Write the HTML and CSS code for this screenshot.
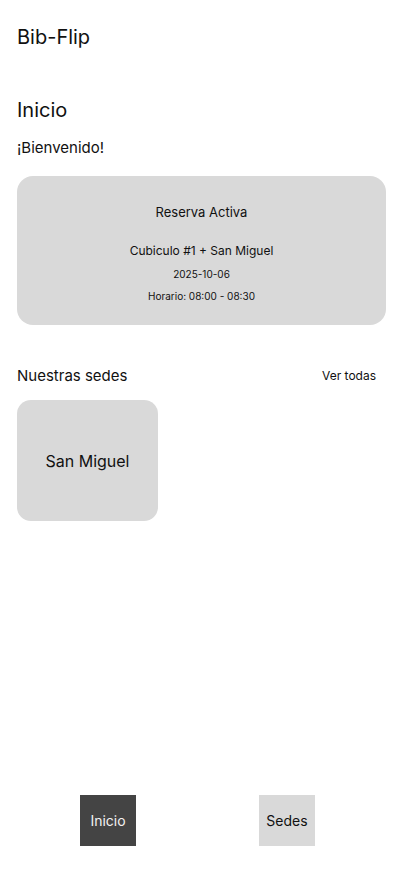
FILE: index.html
```html
<!doctype html>
<html>
<head>
    <meta charset="utf-8">
    <title>Bib-Flip</title>
    <link rel="stylesheet" href="styles.css">
</head>
<body>
<div class="app">
    <p class="brand">Bib-Flip</p>
    <h1 class="title">Inicio</h1>
    <p class="welcome">¡Bienvenido!</p>

    <div class="reserva">
        <p class="reserva-title">Reserva Activa</p>
        <p class="reserva-place">Cubiculo #1 + San Miguel</p>
        <p class="reserva-small">2025-10-06</p>
        <p class="reserva-small">Horario: 08:00 - 08:30</p>
    </div>

    <div class="sedes-head">
        <span class="sedes-title">Nuestras sedes</span>
        <a href="#" class="ver-todas">Ver todas</a>
    </div>
    <div class="sedes-list">
        <div class="sede">San Miguel</div>
    </div>

    <div class="nav">
        <a href="#" class="nav-btn active">Inicio</a>
        <a href="#" class="nav-btn">Sedes</a>
    </div>
</div>
</body>
</html>
```

FILE: styles.css
```css
body{margin:0; padding:0; background:#fff; font-family:Inter, "Noto Sans", sans-serif; color:#111;}
p,h1{margin:0;}
a{text-decoration:none; color:#111;}

.app{height:874px; display:flex; flex-direction:column; padding:0 16px 0 17px; box-sizing:border-box;}
.brand{font-size:20px; line-height:24px; margin-top:25px;}
.title{font-size:20px; font-weight:400; line-height:24px; margin-top:49px;}
.welcome{font-size:15px; line-height:18px; margin-top:17px;}

.reserva{background:#d9d9d9; border-radius:16px; margin-top:19px; height:149px; box-sizing:border-box; padding-top:28px; display:flex; flex-direction:column; align-items:center;}
.reserva-title{font-size:13px; line-height:16px;}
.reserva-place{font-size:12px; line-height:14px; margin-top:24px;}
.reserva-small{font-size:10px; line-height:12px; margin-top:10px;}

.sedes-head{display:flex; justify-content:space-between; align-items:center; margin-top:42px; padding-right:10px;}
.sedes-title{font-size:15px; line-height:18px;}
.ver-todas{font-size:12px; line-height:14px;}
.sedes-list{display:flex; margin-top:15px;}
.sede{width:141px; height:121px; background:#d9d9d9; border-radius:14px; display:flex; align-items:center; justify-content:center; font-size:16px;}

.nav{margin-top:auto; margin-bottom:28px; display:flex; gap:123px; padding-left:63px;}
.nav-btn{width:56px; height:51px; background:#d9d9d9; display:flex; align-items:center; justify-content:center; font-size:14px;}
.nav-btn.active{background:#444; color:#f2f2f2;}
```
